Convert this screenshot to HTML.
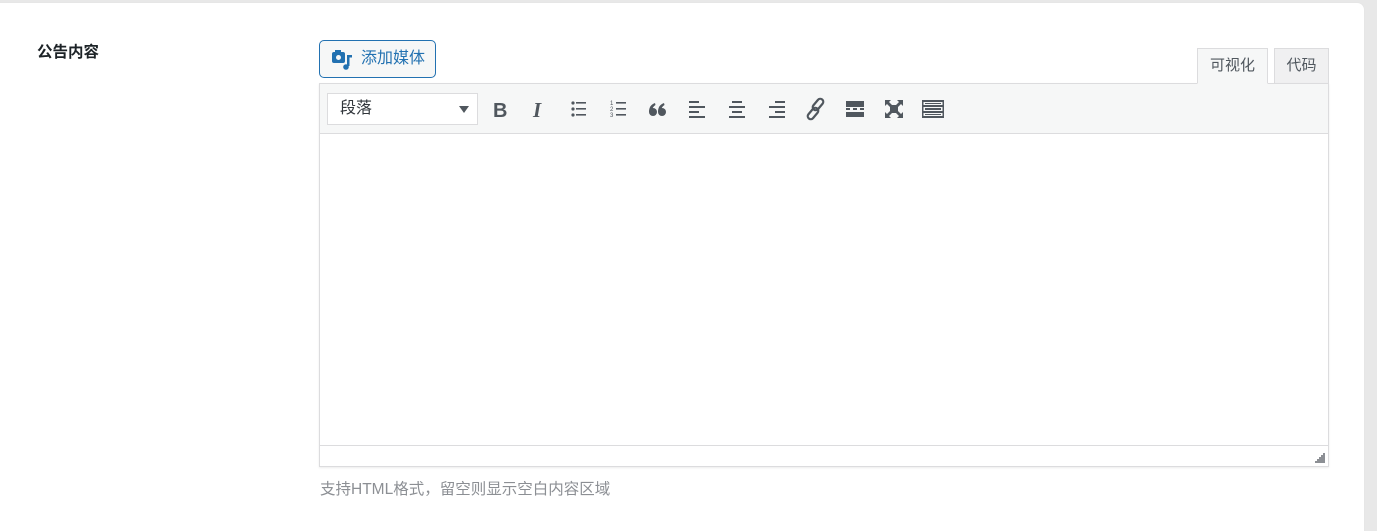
<!DOCTYPE html>
<html><head><meta charset="utf-8"><style>
*{box-sizing:border-box;margin:0;padding:0}
html,body{width:1377px;height:531px;overflow:hidden}
body{background:#e8e8e8;font-family:"Liberation Sans","Noto Sans CJK SC",sans-serif;position:relative}
.card{position:absolute;left:0;top:2px;width:1365px;height:529px;background:#fff;border-top:1px solid #e6e6e6;border-right:1px solid #e6e6e6;border-radius:0 8px 0 0}
.abs{position:absolute}
.lbl{left:37px;top:40px;font-size:15.5px;font-weight:bold;color:#1d2327}
.media{left:319px;top:40px;width:117px;height:38px;border:1px solid #2271b1;border-radius:5px;color:#2271b1;font-size:16px;line-height:36px;padding-left:41px;background:#f6f7f7}
.tab{top:48px;height:36px;border:1px solid #dcdcde;font-size:15px;color:#50575e;text-align:center;line-height:34px}
.ed{left:319px;top:83px;width:1010px;height:384px;border:1px solid #dcdcde;box-shadow:0 1px 2px rgba(0,0,0,.08)}
.tb{position:absolute;left:0;top:0;right:0;height:50px;background:#f6f7f7;border-bottom:1px solid #dcdcde}
.sel{position:absolute;left:7px;top:9px;width:151px;height:32px;background:#fff;border:1px solid #dcdcde;font-size:16px;color:#32373c;padding-left:12px;line-height:30px}
.sel:after{content:"";position:absolute;right:8px;top:12px;border:5px solid transparent;border-top:7px solid #50575e;border-bottom:0}
.ic{position:absolute;top:13px;width:24px;height:24px}
.st{position:absolute;left:0;right:0;bottom:0;height:21px;border-top:1px solid #dcdcde}
.hint{left:320px;top:477px;font-size:15.5px;color:#8c8f94}
</style></head><body>
<div class="card"></div>
<div class="abs lbl">公告内容</div>
<div class="abs media"><svg class="abs" style="left:11px;top:8px" width="22" height="22" viewBox="0 0 22 22" fill="#2271b1"><rect x="1" y="3" width="13" height="11" rx="2"/><rect x="4" y="1" width="6" height="3"/><circle cx="7.5" cy="8.5" r="2.5" fill="#f6f7f7"/><rect x="16" y="6" width="2.5" height="11"/><rect x="16" y="6" width="5" height="2.5"/><circle cx="15" cy="18" r="2.8"/></svg>添加媒体</div>
<div class="abs tab" style="left:1197px;width:71px;background:#f6f7f7;border-bottom-color:#f6f7f7;z-index:2">可视化</div>
<div class="abs tab" style="left:1274px;width:55px;background:#f0f0f1">代码</div>
<div class="abs ed">
<div class="tb">
<div class="sel">段落</div>
<svg class="ic" style="left:168px" viewBox="0 0 24 24"><text x="5" y="20" font-size="20" font-weight="bold" fill="#50575e" font-family="Liberation Sans">B</text></svg>
<svg class="ic" style="left:208px" viewBox="0 0 24 24"><text x="5" y="20" font-size="21" font-weight="bold" font-style="italic" fill="#50575e" font-family="Liberation Serif">I</text></svg>
<svg class="ic" style="left:247px" viewBox="0 0 24 24" fill="#50575e"><circle cx="6" cy="6" r="1.6"/><circle cx="6" cy="12" r="1.6"/><circle cx="6" cy="18" r="1.6"/><rect x="9" y="5" width="10" height="1.6"/><rect x="9" y="11" width="10" height="1.6"/><rect x="9" y="17" width="10" height="1.6"/></svg>
<svg class="ic" style="left:287px" viewBox="0 0 24 24" fill="#50575e"><text x="3" y="8" font-size="6">1</text><text x="3" y="14" font-size="6">2</text><text x="3" y="20" font-size="6">3</text><rect x="9" y="5" width="10" height="1.6"/><rect x="9" y="11" width="10" height="1.6"/><rect x="9" y="17" width="10" height="1.6"/></svg>
<svg class="ic" style="left:326px" viewBox="0 0 24 24" fill="#50575e"><circle cx="7" cy="15" r="4"/><circle cx="16" cy="15" r="4"/><path d="M3 15 Q3 8 9 6 L9.5 8 Q6 10 6.5 14Z"/><path d="M12 15 Q12 8 18 6 L18.5 8 Q15 10 15.5 14Z"/></svg>
<svg class="ic" style="left:366px" viewBox="0 0 24 24" fill="#50575e"><rect x="3" y="4" width="10" height="2"/><rect x="3" y="9" width="16" height="2"/><rect x="3" y="14" width="10" height="2"/><rect x="3" y="19" width="16" height="2"/></svg>
<svg class="ic" style="left:405px" viewBox="0 0 24 24" fill="#50575e"><rect x="7" y="4" width="10" height="2"/><rect x="4" y="9" width="16" height="2"/><rect x="7" y="14" width="10" height="2"/><rect x="4" y="19" width="16" height="2"/></svg>
<svg class="ic" style="left:444px" viewBox="0 0 24 24" fill="#50575e"><rect x="11" y="4" width="10" height="2"/><rect x="5" y="9" width="16" height="2"/><rect x="11" y="14" width="10" height="2"/><rect x="5" y="19" width="16" height="2"/></svg>
<svg class="ic" style="left:484px" viewBox="0 0 24 24" fill="none" stroke="#50575e" stroke-width="2.2"><rect x="11" y="1" width="6" height="13" rx="3" transform="rotate(40 14 7.5)"/><rect x="6" y="10" width="6" height="13" rx="3" transform="rotate(40 9 16.5)"/></svg>
<svg class="ic" style="left:523px" viewBox="0 0 24 24" fill="#50575e"><rect x="3" y="4" width="18" height="6"/><rect x="3" y="11" width="4" height="2"/><rect x="10" y="11" width="4" height="2"/><rect x="17" y="11" width="4" height="2"/><rect x="3" y="15" width="18" height="5"/></svg>
<svg class="ic" style="left:562px" viewBox="0 0 24 24" fill="#50575e"><rect x="8" y="8" width="8" height="8"/><path d="M3 3h6l-2 2 3 3-2 2-3-3-2 2z"/><path d="M21 3v6l-2-2-3 3-2-2 3-3-2-2z"/><path d="M3 21v-6l2 2 3-3 2 2-3 3 2 2z"/><path d="M21 21h-6l2-2-3-3 2-2 3 3 2-2z"/></svg>
<svg class="ic" style="left:601px" viewBox="0 0 24 24" fill="#50575e"><rect x="1" y="3" width="22" height="18"/><rect x="2.5" y="5" width="19" height="3" fill="#f6f7f7"/><rect x="2.5" y="10" width="19" height="4" fill="#f6f7f7"/><rect x="2.5" y="16" width="19" height="3" fill="#f6f7f7"/><rect x="4" y="11" width="16" height="2"/><rect x="4" y="6" width="16" height="1"/><rect x="4" y="17" width="16" height="1"/></svg>
</div>
<div class="st"><svg style="position:absolute;right:3px;bottom:3px" width="11" height="11" viewBox="0 0 11 11" fill="#8c8f94"><rect x="9" y="1" width="2" height="2"/><rect x="7" y="3" width="2" height="2"/><rect x="9" y="3" width="2" height="2"/><rect x="5" y="5" width="6" height="2"/><rect x="3" y="7" width="8" height="2"/><rect x="1" y="9" width="10" height="2"/></svg></div>
</div>
<div class="abs hint">支持HTML格式，留空则显示空白内容区域</div>
</body></html>
